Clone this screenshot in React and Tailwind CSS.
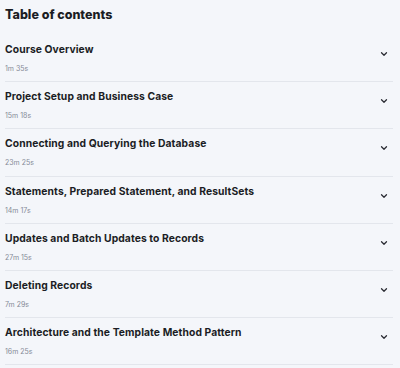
import { ChevronDown } from 'lucide-react';

const modules = [
  { title: 'Course Overview', duration: '1m 35s' },
  { title: 'Project Setup and Business Case', duration: '15m 18s' },
  { title: 'Connecting and Querying the Database', duration: '23m 25s' },
  { title: 'Statements, Prepared Statement, and ResultSets', duration: '14m 17s' },
  { title: 'Updates and Batch Updates to Records', duration: '27m 15s' },
  { title: 'Deleting Records', duration: '7m 29s' },
  { title: 'Architecture and the Template Method Pattern', duration: '16m 25s' },
];

const App = () => {
  return (
    <div
      className="min-h-screen bg-[#f4f6fa] text-[#1b1d24] overflow-hidden"
      style={{ fontFamily: 'Inter, "Noto Sans", sans-serif' }}
    >
      <div className="pl-[5px] pr-[7px]">
        <h2 className="text-[12.5px] leading-[18px] font-extrabold pt-[6px] h-[35px]">Table of contents</h2>
        <ul>
          {modules.map((m) => (
            <li key={m.title} className="h-[47.2px] border-b border-[#e3e6ec] flex items-start justify-between">
              <div className="pt-[7px]">
                <div className="text-[10.3px] leading-[14px] font-bold tracking-[0.1px]">{m.title}</div>
                <div className="mt-[8px] text-[7px] leading-[10px] text-[#858a97]">{m.duration}</div>
              </div>
              <ChevronDown className="w-[10px] h-[10px] mt-[14px] mr-[4px] text-[#2a2c33]" strokeWidth={3} />
            </li>
          ))}
        </ul>
      </div>
    </div>
  );
};

export default App;
